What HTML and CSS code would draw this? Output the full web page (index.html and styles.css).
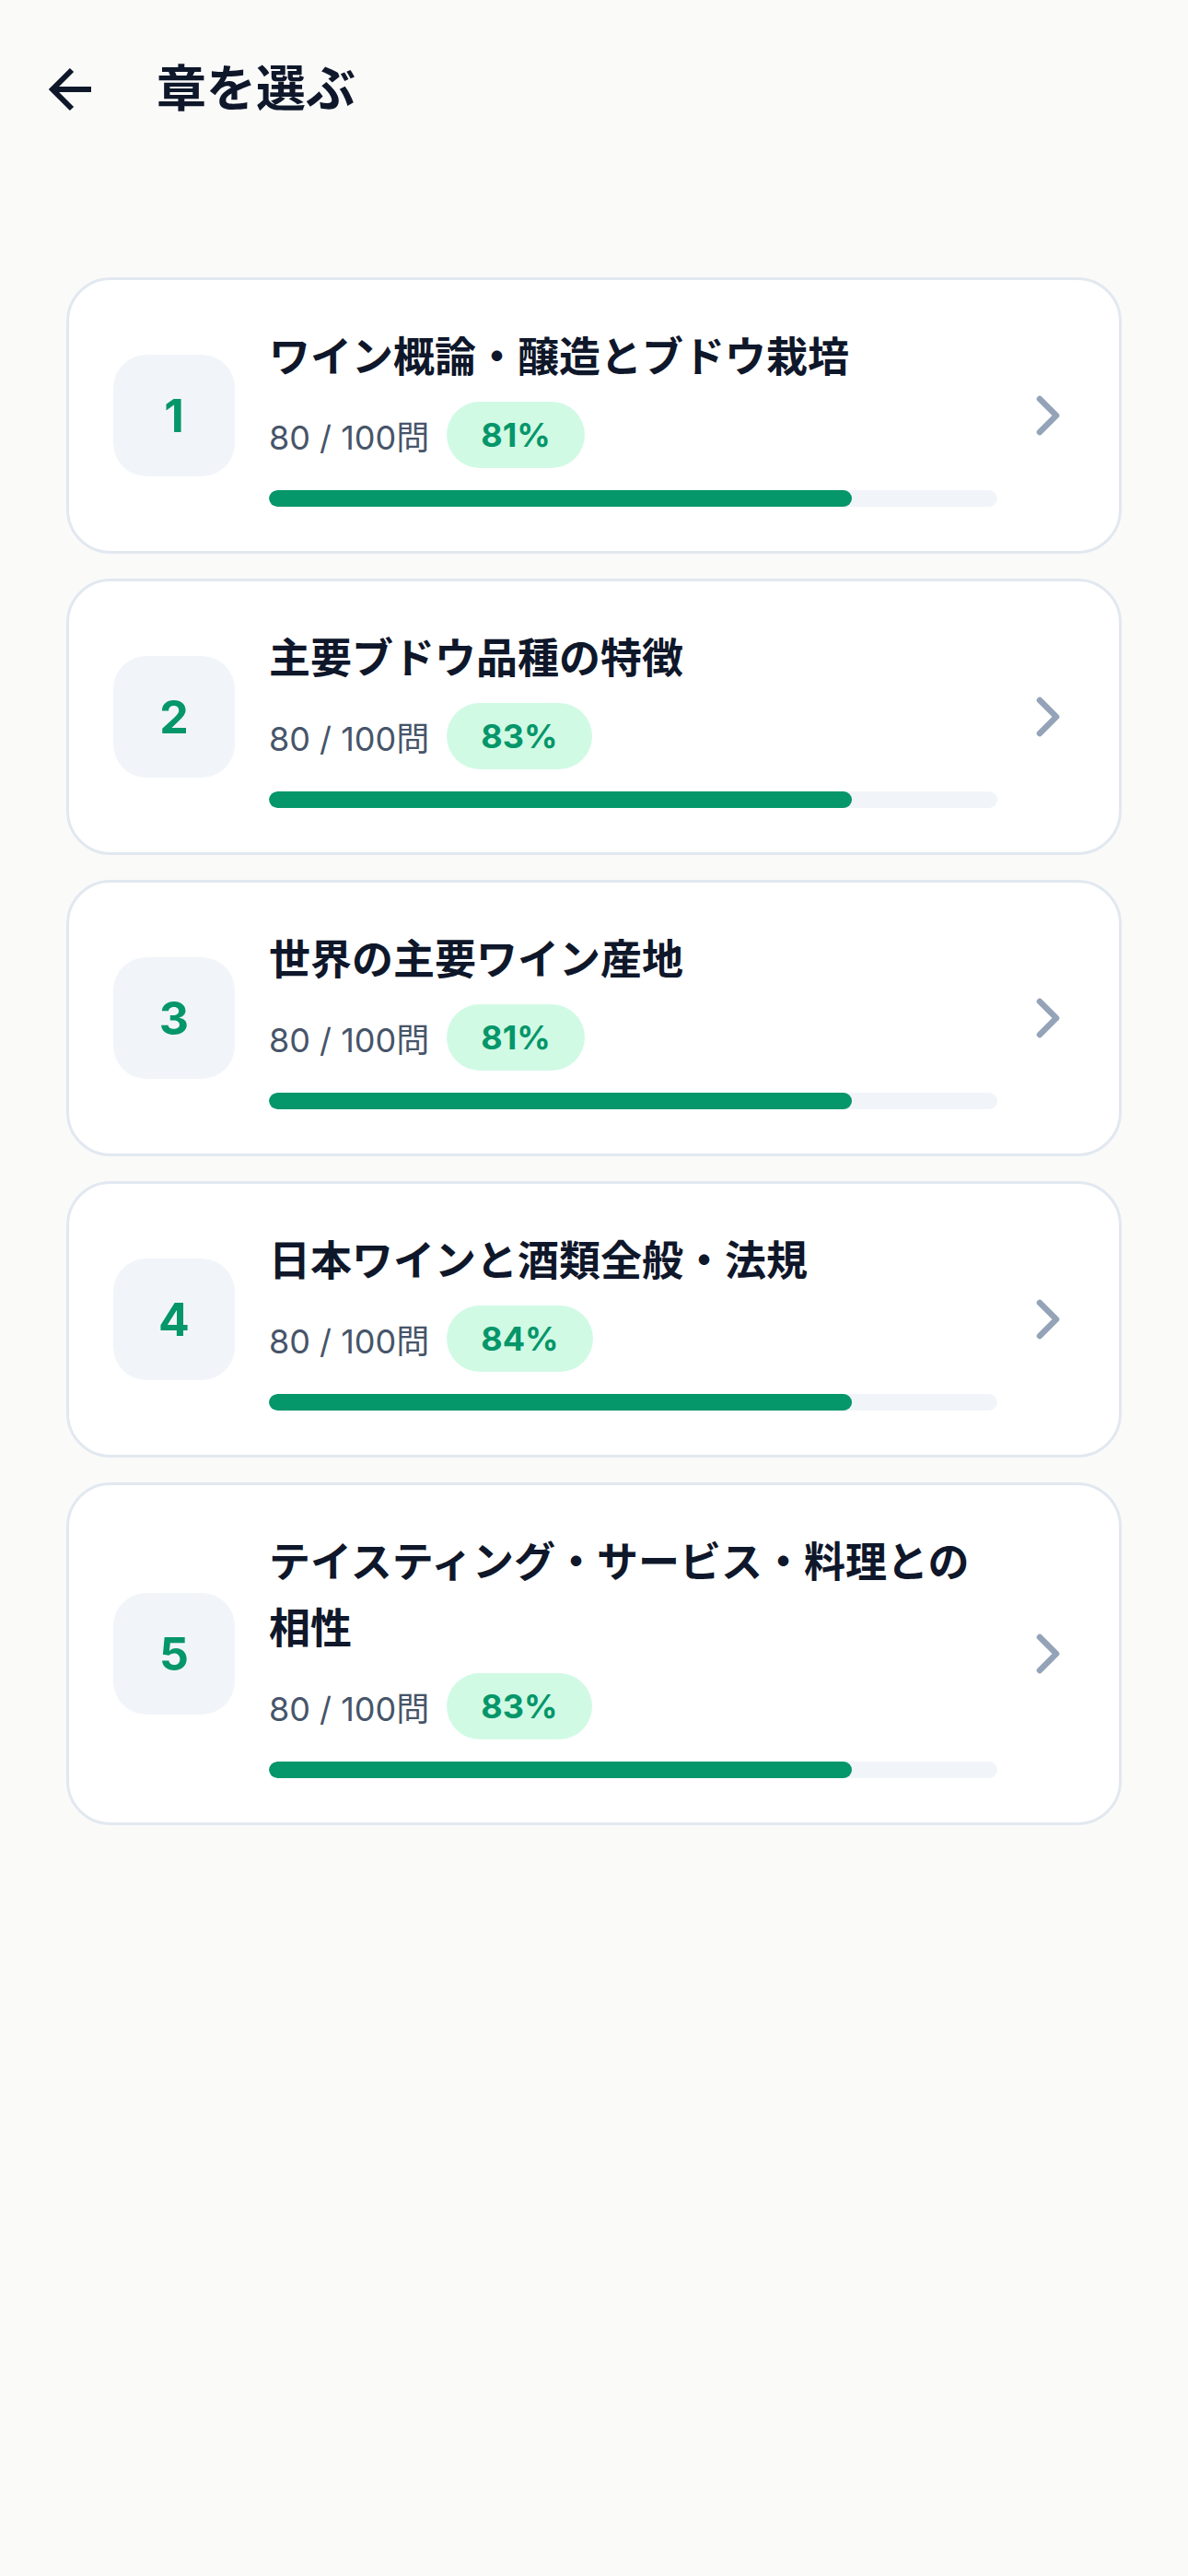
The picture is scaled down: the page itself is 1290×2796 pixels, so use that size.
FILE: index.html
```html
<!DOCTYPE html>
<html lang="ja">
<head>
<meta charset="utf-8">
<title>章を選ぶ</title>
<link rel="stylesheet" href="styles.css">
</head>
<body>
<header class="topbar">
  <button class="back" aria-label="戻る">
    <svg viewBox="0 0 24 24" width="72" height="72" fill="none" stroke="#0f172a" stroke-width="2" stroke-linecap="butt" stroke-linejoin="miter"><path d="m12 19-7-7 7-7"/><path d="M19 12H5"/></svg>
  </button>
  <h1 class="title">章を選ぶ</h1>
</header>

<main class="list">
  <a class="card">
    <div class="num">1</div>
    <div class="body">
      <div class="name">ワイン概論・醸造とブドウ栽培</div>
      <div class="meta"><span class="count">80 / 100問</span><span class="pill">81%</span></div>
      <div class="track"><div class="fill" style="width:80%"></div></div>
    </div>
    <svg class="chev" viewBox="0 0 24 24" width="72" height="72" fill="none" stroke="#94a3b8" stroke-width="2.2" stroke-linecap="round" stroke-linejoin="round"><path d="m9 18 6-6-6-6"/></svg>
  </a>
  <a class="card">
    <div class="num">2</div>
    <div class="body">
      <div class="name">主要ブドウ品種の特徴</div>
      <div class="meta"><span class="count">80 / 100問</span><span class="pill">83%</span></div>
      <div class="track"><div class="fill" style="width:80%"></div></div>
    </div>
    <svg class="chev" viewBox="0 0 24 24" width="72" height="72" fill="none" stroke="#94a3b8" stroke-width="2.2" stroke-linecap="round" stroke-linejoin="round"><path d="m9 18 6-6-6-6"/></svg>
  </a>
  <a class="card">
    <div class="num">3</div>
    <div class="body">
      <div class="name">世界の主要ワイン産地</div>
      <div class="meta"><span class="count">80 / 100問</span><span class="pill">81%</span></div>
      <div class="track"><div class="fill" style="width:80%"></div></div>
    </div>
    <svg class="chev" viewBox="0 0 24 24" width="72" height="72" fill="none" stroke="#94a3b8" stroke-width="2.2" stroke-linecap="round" stroke-linejoin="round"><path d="m9 18 6-6-6-6"/></svg>
  </a>
  <a class="card">
    <div class="num">4</div>
    <div class="body">
      <div class="name">日本ワインと酒類全般・法規</div>
      <div class="meta"><span class="count">80 / 100問</span><span class="pill">84%</span></div>
      <div class="track"><div class="fill" style="width:80%"></div></div>
    </div>
    <svg class="chev" viewBox="0 0 24 24" width="72" height="72" fill="none" stroke="#94a3b8" stroke-width="2.2" stroke-linecap="round" stroke-linejoin="round"><path d="m9 18 6-6-6-6"/></svg>
  </a>
  <a class="card">
    <div class="num">5</div>
    <div class="body">
      <div class="name">テイスティング・サービス・料理との相性</div>
      <div class="meta"><span class="count">80 / 100問</span><span class="pill">83%</span></div>
      <div class="track"><div class="fill" style="width:80%"></div></div>
    </div>
    <svg class="chev" viewBox="0 0 24 24" width="72" height="72" fill="none" stroke="#94a3b8" stroke-width="2.2" stroke-linecap="round" stroke-linejoin="round"><path d="m9 18 6-6-6-6"/></svg>
  </a>
</main>
</body>
</html>
```

FILE: styles.css
```css
* { box-sizing: border-box; }

html, body {
  margin: 0;
  padding: 0;
  background: #fafaf9;
}

body {
  font-family: "Inter", "Noto Sans CJK JP", sans-serif;
  color: #0f172a;
  min-height: 2796px;
}

.topbar {
  display: flex;
  align-items: center;
  gap: 56px;
  padding: 61px 42px 0;
}

.back {
  display: block;
  width: 72px;
  height: 72px;
  padding: 0;
  border: 0;
  background: none;
}

.back svg { display: block; }

.title {
  margin: 0;
  font-size: 54px;
  line-height: 72px;
  font-weight: 700;
  color: #0f172a;
}

.list {
  display: flex;
  flex-direction: column;
  gap: 27px;
  padding: 168px 72px 0;
}

.card {
  display: flex;
  align-items: center;
  background: #ffffff;
  border: 3px solid #e2e8f0;
  border-radius: 48px;
  padding: 48px 41px 48px 48px;
}

.num {
  flex: 0 0 132px;
  width: 132px;
  height: 132px;
  border-radius: 36px;
  background: #f1f5f9;
  color: #059669;
  font-size: 50px;
  font-weight: 700;
  display: flex;
  align-items: center;
  justify-content: center;
  margin-right: 37px;
}

.body {
  flex: 1;
  min-width: 0;
}

.name {
  font-size: 45px;
  line-height: 72px;
  font-weight: 700;
  color: #0f172a;
}

.meta {
  display: flex;
  align-items: center;
  gap: 19px;
  margin-top: 12px;
}

.count {
  font-size: 36px;
  color: #475569;
}

.pill {
  display: inline-flex;
  align-items: center;
  height: 72px;
  padding: 0 37px;
  border-radius: 36px;
  background: #d1fae5;
  color: #059669;
  font-size: 36px;
  font-weight: 700;
}

.track {
  margin-top: 24px;
  height: 18px;
  border-radius: 9px;
  background: #f1f5f9;
  overflow: hidden;
}

.fill {
  height: 100%;
  border-radius: 9px;
  background: #059669;
}

.chev {
  flex: 0 0 72px;
  display: block;
  margin-left: 19px;
}
```
